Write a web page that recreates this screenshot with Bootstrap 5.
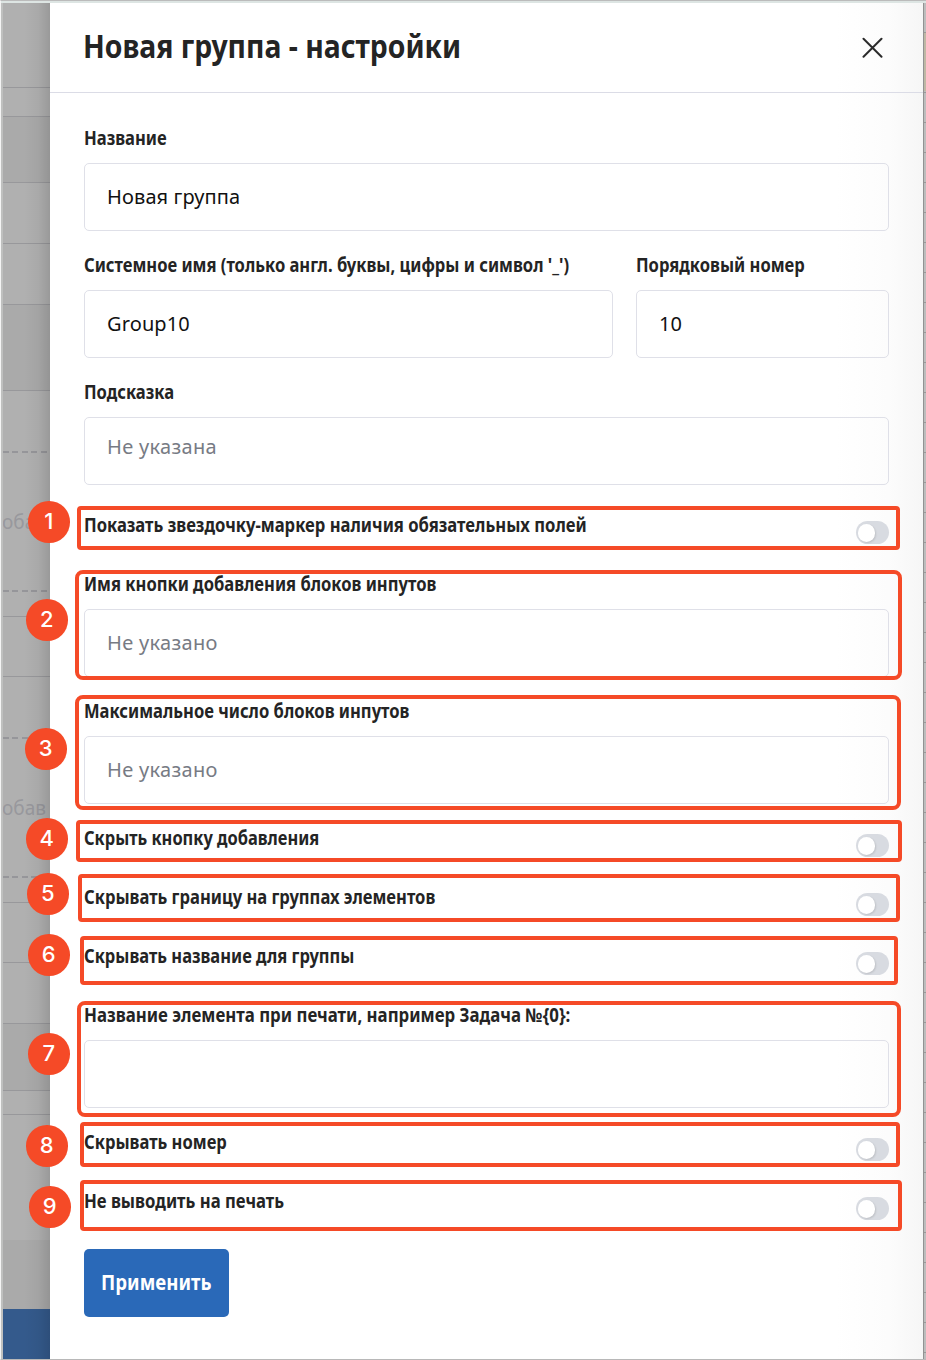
<!DOCTYPE html>
<html lang="ru">
<head>
<meta charset="utf-8">
<meta name="viewport" content="width=device-width, initial-scale=1">
<title>Новая группа - настройки</title>
<link href="https://cdn.jsdelivr.net/npm/bootstrap@5.3.0/dist/css/bootstrap.min.css" rel="stylesheet">
<style>
body{width:926px;height:1360px;overflow:hidden;background:#bdbdbd;font-family:"Noto Sans",sans-serif;color:#242424}
.screen{width:926px;height:1360px;border-top:1px solid #bbb;border-bottom:1px solid #b8b8b8;border-left:1px solid #f4f4f4}
.topline{height:2px;background:#dde5e3}
.backdrop-strip{width:49px;border-left:2px solid #bfc0bf;background:#b0b0b0;overflow:hidden;position:relative}
.backdrop-strip::after{content:"";position:absolute;inset:0;background:linear-gradient(90deg,transparent 45%,rgba(0,0,0,.04) 75%,rgba(0,0,0,.13))}
.strip{border-bottom:1px solid #98989b;flex:none;box-sizing:border-box;font-size:19px;line-height:1;color:#98989d;white-space:nowrap;display:flex;align-items:center}
.strip span{margin-left:-1px}
.strip.dim{background:#aaa}
.strip.dash{border-bottom:0;background:repeating-linear-gradient(90deg,#96969a 0 6px,transparent 6px 9.5px) left bottom/100% 2px no-repeat}
.strip.none{border:0}
.strip.blue{background:#345a8c}
.panel{width:873px;background:linear-gradient(90deg,#fff 90%,#fcfcfc 96%,#f6f6f6)}
.edge{width:3px;border-left:1px solid #929292;background:repeating-linear-gradient(#bdbdbd 0 29px,#999 29px 30px)}
.edge i{display:block;height:58px;margin-top:30px;background:#bfb8a5}
.panel-head{height:90px;border-bottom:1px solid #dbdce6;padding:0 40px 0 34px}
.fit{display:inline-block;white-space:nowrap;transform-origin:0 50%;transform:scaleX(var(--sx,.872))}
.panel-title{font-size:32px;font-weight:700;line-height:40px;margin:-3px 0 0 -1px}
.panel-title .fit{--sx:.886}
.panel-form{padding:32px 34px 0}
.field{height:127px}
.field.tall{height:133px}
.caption{display:block;height:38px;line-height:26px;font-size:19px;font-weight:700;white-space:nowrap}
.caption .fit{margin-left:-.5px}
.field .form-control{height:68px;border:1px solid #dfe0e8;border-radius:5px;padding:0 22px 2px;font-size:20px;letter-spacing:.12px;color:#111;background:transparent;box-shadow:none}
.field .form-control::placeholder{color:#777b84;opacity:1;letter-spacing:.3px}
.field.tall .form-control{padding-bottom:10px}
.toggle-row{height:59px}
.toggle-row .form-check-input{width:33.5px;height:23px;margin:9px 0 0;border:0;border-radius:12px;background:#d8dbe1;position:relative;float:none}
.toggle-row .form-check-input::after{content:"";position:absolute;left:2px;top:3px;width:17.5px;height:17.5px;border-radius:50%;background:#fff;box-shadow:1px 1px 2px rgba(0,0,0,.12)}
.btn-apply{width:145px;height:68px;margin-top:2px;background:#2a69b8;border-radius:5px;color:#fff;font-weight:700;font-size:22px;padding:0 0 4px 16px;text-align:left}
.btn-apply .fit{--sx:.848}
.btn-apply:hover{background:#2a69b8;color:#fff}
.notes{inset:0;pointer-events:none}
.frame{position:absolute;border:4px solid #f54a27;border-radius:4px;left:var(--x);top:var(--y);width:var(--w);height:var(--h)}
.frame.round{border-radius:8px}
.pin{position:absolute;width:41.5px;height:41.5px;border-radius:50%;background:#f54a27;color:#fff;font:500 22px/41px Inter,sans-serif;text-align:center;left:var(--x);top:var(--y)}
</style>
</head>
<body class="position-relative">
<div class="screen d-flex flex-column">
 <div class="topline"></div>
 <div class="d-flex flex-grow-1">
  <aside class="backdrop-strip d-flex flex-column" aria-hidden="true">
   <div class="strip" style="height:85px"></div>
   <div class="strip" style="height:29px"></div>
   <div class="strip dim" style="height:66px"></div>
   <div class="strip" style="height:61px"></div>
   <div class="strip" style="height:61px"></div>
   <div class="strip dim" style="height:86px"></div>
   <div class="strip dash" style="height:62px"></div>
   <div class="strip dash" style="height:139px"><span>оба</span></div>
   <div class="strip" style="height:25px"></div>
   <div class="strip" style="height:60px"></div>
   <div class="strip dash" style="height:62px"></div>
   <div class="strip dash" style="height:139px"><span>обав</span></div>
   <div class="strip" style="height:25px"></div>
   <div class="strip" style="height:60px"></div>
   <div class="strip" style="height:61px"></div>
   <div class="strip dim" style="height:67px"></div>
   <div class="strip" style="height:24px"></div>
   <div class="strip none" style="height:125px"></div>
   <div class="strip none dim" style="height:69px"></div>
   <div class="strip none blue flex-grow-1"></div>
  </aside>
  <main class="panel">
   <header class="panel-head d-flex justify-content-between align-items-center">
    <h1 class="panel-title"><span class="fit">Новая группа - настройки</span></h1>
    <svg width="21" height="21" viewBox="0 0 21 21" aria-label="Закрыть"><path d="M1.5 1.8l18 18M19.5 1.8l-18 18" stroke="#2b2b2b" stroke-width="2" stroke-linecap="round"/></svg>
   </header>
   <form class="panel-form">
    <div class="field"><label class="caption"><span class="fit">Название</span></label><input class="form-control" value="Новая группа"></div>
    <div class="d-flex">
     <div class="field" style="width:529px"><label class="caption"><span class="fit">Системное имя (только англ. буквы, цифры и символ '_')</span></label><input class="form-control" value="Group10"></div>
     <div class="field flex-grow-1" style="margin-left:23px"><label class="caption"><span class="fit">Порядковый номер</span></label><input class="form-control" style="width:253px" value="10"></div>
    </div>
    <div class="field tall"><label class="caption"><span class="fit">Подсказка</span></label><input class="form-control" placeholder="Не указана"></div>
    <div class="toggle-row d-flex justify-content-between form-switch p-0"><label class="caption"><span class="fit" style="--sx:.875">Показать звездочку-маркер наличия обязательных полей</span></label><input class="form-check-input" type="checkbox"></div>
    <div class="field"><label class="caption"><span class="fit">Имя кнопки добавления блоков инпутов</span></label><input class="form-control" placeholder="Не указано"></div>
    <div class="field"><label class="caption"><span class="fit">Максимальное число блоков инпутов</span></label><input class="form-control" placeholder="Не указано"></div>
    <div class="toggle-row d-flex justify-content-between form-switch p-0"><label class="caption"><span class="fit" style="--sx:.865">Скрыть кнопку добавления</span></label><input class="form-check-input" type="checkbox"></div>
    <div class="toggle-row d-flex justify-content-between form-switch p-0"><label class="caption"><span class="fit">Скрывать границу на группах элементов</span></label><input class="form-check-input" type="checkbox"></div>
    <div class="toggle-row d-flex justify-content-between form-switch p-0"><label class="caption"><span class="fit" style="--sx:.869">Скрывать название для группы</span></label><input class="form-check-input" type="checkbox"></div>
    <div class="field"><label class="caption"><span class="fit" style="--sx:.885">Название элемента при печати, например Задача №{0}:</span></label><input class="form-control"></div>
    <div class="toggle-row d-flex justify-content-between form-switch p-0"><label class="caption"><span class="fit">Скрывать номер</span></label><input class="form-check-input" type="checkbox"></div>
    <div class="toggle-row d-flex justify-content-between form-switch p-0"><label class="caption"><span class="fit" style="--sx:.878">Не выводить на печать</span></label><input class="form-check-input" type="checkbox"></div>
    <button type="button" class="btn btn-apply"><span class="fit">Применить</span></button>
   </form>
  </main>
  <div class="edge"><i></i></div>
 </div>
</div>
<div class="notes position-absolute">
 <div class="frame" style="--x:77px;--y:506px;--w:823px;--h:44px"></div>
 <div class="frame round" style="--x:75px;--y:570px;--w:827px;--h:110px"></div>
 <div class="frame round" style="--x:75px;--y:695px;--w:826px;--h:115px"></div>
 <div class="frame" style="--x:76px;--y:820px;--w:826px;--h:42px"></div>
 <div class="frame" style="--x:78px;--y:874px;--w:822px;--h:48px"></div>
 <div class="frame" style="--x:80px;--y:936px;--w:818px;--h:49px"></div>
 <div class="frame round" style="--x:77px;--y:1001px;--w:824px;--h:116px"></div>
 <div class="frame" style="--x:80px;--y:1122px;--w:820px;--h:45px"></div>
 <div class="frame" style="--x:80px;--y:1180px;--w:822px;--h:51px"></div>
 <div class="pin" style="--x:28px;--y:501px">1</div>
 <div class="pin" style="--x:26px;--y:599px">2</div>
 <div class="pin" style="--x:25px;--y:728px">3</div>
 <div class="pin" style="--x:26px;--y:818px">4</div>
 <div class="pin" style="--x:27px;--y:873px">5</div>
 <div class="pin" style="--x:28px;--y:934px">6</div>
 <div class="pin" style="--x:28px;--y:1033px">7</div>
 <div class="pin" style="--x:26px;--y:1125px">8</div>
 <div class="pin" style="--x:29px;--y:1186px">9</div>
</div>
<script src="https://cdn.jsdelivr.net/npm/bootstrap@5.3.0/dist/js/bootstrap.bundle.min.js"></script>
</body>
</html>
